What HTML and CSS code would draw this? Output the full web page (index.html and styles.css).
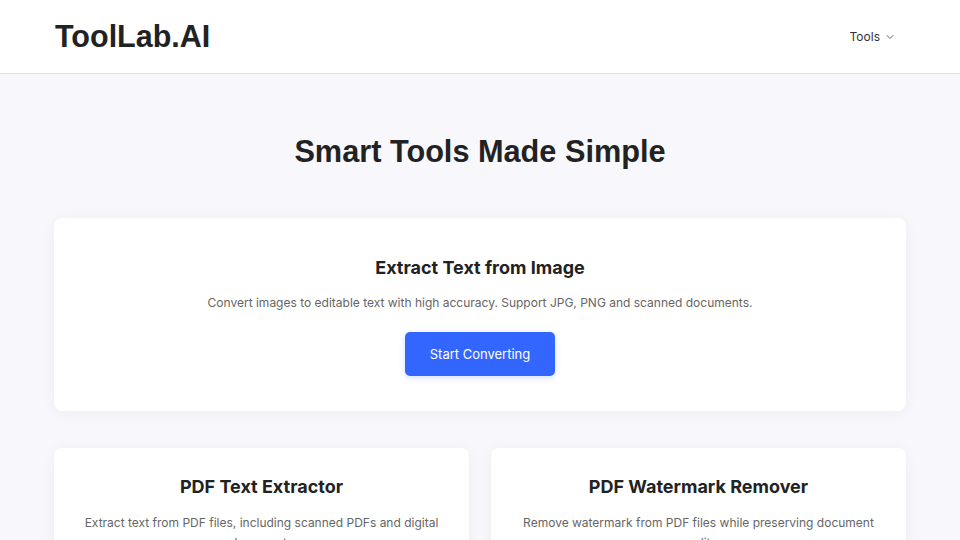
FILE: index.html
```html
<!DOCTYPE html>
<html lang="en">

<head>
    <meta charset="UTF-8">
    <meta name="viewport" content="width=device-width, initial-scale=1.0">
    <title>ToolLab.AI</title>
    <link rel="stylesheet" href="styles.css">
</head>

<body>
    <header class="header">
        <div class="container header-inner">
            <a class="logo" href="#">ToolLab.AI</a>
            <nav class="nav">
                <span class="nav-item">Tools
                    <svg class="chevron" width="10" height="10" viewBox="0 0 10 10">
                        <path d="M2 3.5 L5 6.5 L8 3.5" fill="none" stroke="#666" stroke-width="1" stroke-linecap="round" stroke-linejoin="round" />
                    </svg>
                </span>
            </nav>
        </div>
    </header>

    <main class="main">
        <div class="container">
            <h1 class="title">Smart Tools Made Simple</h1>

            <div class="card hero">
                <h2>Extract Text from Image</h2>
                <p>Convert images to editable text with high accuracy. Support JPG, PNG and scanned documents.</p>
                <a class="btn" href="#">Start Converting</a>
            </div>

            <div class="tools">
                <div class="card tool">
                    <h2>PDF Text Extractor</h2>
                    <p>Extract text from PDF files, including scanned PDFs and digital documents</p>
                </div>
                <div class="card tool">
                    <h2>PDF Watermark Remover</h2>
                    <p>Remove watermark from PDF files while preserving document quality</p>
                </div>
            </div>
        </div>
    </main>
</body>

</html>
```
FILE: styles.css
```css
body,
h1,
h2,
p {
    margin: 0;
    padding: 0;
}

body {
    font-family: Inter, "Noto Sans", sans-serif;
    background-color: #f8f8fc;
    color: #222;
}

a {
    text-decoration: none;
}

.container {
    width: 852px;
    margin: 0 auto;
}

.header {
    background-color: #fff;
    border-bottom: 1px solid #e4e4e8;
}

.header-inner {
    height: 73px;
    display: flex;
    align-items: center;
    justify-content: space-between;
}

.logo {
    font-family: "Liberation Sans", Arial, sans-serif;
    font-weight: bold;
    font-size: 30.5px;
    color: #222;
    margin-left: 1px;
}

.nav {
    padding-right: 11px;
}

.nav-item {
    font-size: 12px;
    color: #333;
    display: flex;
    align-items: center;
    gap: 5px;
}

.main {
    padding-top: 60px;
}

.title {
    font-family: "Liberation Sans", Arial, sans-serif;
    font-weight: bold;
    font-size: 30.7px;
    line-height: 36px;
    text-align: center;
    color: #222;
    margin-bottom: 48px;
}

.card {
    background-color: #fff;
    border-radius: 8px;
    box-shadow: 0 2px 14px rgba(0, 0, 0, 0.05);
    text-align: center;
}

.card h2 {
    font-size: 18px;
    font-weight: 700;
    line-height: 27px;
    color: #222;
}

.card p {
    font-size: 12px;
    line-height: 20px;
    color: #666;
}

.hero {
    padding: 36px 40px 35px;
}

.hero p {
    margin-top: 12px;
}

.btn {
    display: inline-block;
    margin-top: 19px;
    width: 150px;
    height: 44px;
    line-height: 44px;
    background-color: #3366ff;
    color: #fff;
    font-size: 13px;
    border-radius: 5px;
    box-shadow: 0 2px 6px rgba(51, 102, 255, 0.2);
}

.tools {
    margin-top: 37px;
    display: grid;
    grid-template-columns: 1fr 1fr;
    gap: 22px;
}

.tool {
    padding: 25px 24px 24px;
}

.tool p {
    margin-top: 13px;
}
```
